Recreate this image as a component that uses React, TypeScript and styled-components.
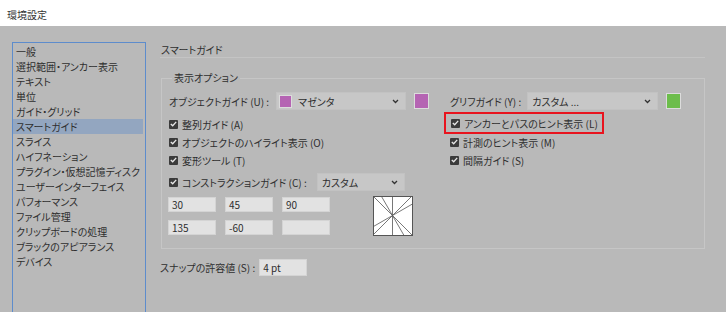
import styled, { createGlobalStyle } from 'styled-components';

const GlobalStyle = createGlobalStyle`
  body {
    margin: 0;
    font-family: "Noto Sans CJK JP", "Noto Sans", sans-serif;
    font-size: 10px;
    font-feature-settings: "palt";
    color: #2e2e2e;
    background: #b9b9b9;
  }
`;

const TitleBar = styled.div({
  height: '26px',
  background: '#ffffff',
  display: 'flex',
  alignItems: 'center',
  paddingLeft: '7px',
  paddingTop: '2px',
  boxSizing: 'border-box',
  fontSize: '10px',
  color: '#333'
});

const Main = styled.div({
  display: 'flex',
  height: '286px',
  background: '#b9b9b9',
  overflow: 'hidden'
});

const Sidebar = styled.ul({
  listStyle: 'none',
  margin: '16px 0 0 12px',
  padding: '1px 0 0 0',
  width: '134px',
  height: '300px',
  boxSizing: 'border-box',
  border: '1px solid #5d8ccc',
  flexShrink: 0
});

const SideItem = styled.li<{ $active?: boolean }>(props => ({
  height: '15px',
  lineHeight: '15px',
  paddingLeft: '3px',
  marginRight: '2px',
  background: props.$active ? '#93a6c0' : 'transparent',
  whiteSpace: 'nowrap'
}));

const Content = styled.div({
  marginLeft: '14px',
  width: '545px',
  display: 'flex',
  flexDirection: 'column'
});

const Heading = styled.div({
  height: '32px',
  padding: '16px 0 0 1px',
  lineHeight: '16px',
  borderBottom: '1px solid #c4c4c4',
  boxSizing: 'border-box'
});

const Group = styled.fieldset({
  margin: '14px 0 0 1px',
  padding: '7px 0 0 7px',
  height: '177px',
  boxSizing: 'border-box',
  border: '1px solid #c6c6c6',
  display: 'grid',
  gridTemplateColumns: '281px 1fr'
});

const Legend = styled.legend({
  padding: '0 2px',
  marginLeft: '3px',
  lineHeight: '12px'
});

const Column = styled.div({
  display: 'flex',
  flexDirection: 'column'
});

const Row = styled.div<{ $h?: number; $mt?: number }>(props => ({
  display: 'flex',
  alignItems: 'center',
  height: `${props.$h ?? 18}px`,
  marginTop: `${props.$mt ?? 0}px`,
  whiteSpace: 'nowrap'
}));

const Label = styled.span<{ $gap?: number }>(props => ({
  marginRight: `${props.$gap ?? 7}px`
}));

const Select = styled.div<{ $w: number }>(props => ({
  width: `${props.$w}px`,
  height: '18px',
  boxSizing: 'border-box',
  background: '#c7c7c7',
  border: '1px solid #c2c2c2',
  display: 'flex',
  alignItems: 'center',
  padding: '0 6px 0 2px',
  gap: '4px'
}));

const SelectText = styled.span({
  flex: 1,
  paddingLeft: '2px'
});

const Chevron = styled.svg({
  width: '7px',
  height: '5px'
});

const Swatch = styled.span<{ $color: string; $size: number }>(props => ({
  display: 'inline-block',
  width: `${props.$size}px`,
  height: `${props.$size}px`,
  background: props.$color,
  border: '1px solid #dcdcdc',
  boxSizing: 'border-box',
  flexShrink: 0
}));

const ColorChip = styled(Swatch)({
  marginLeft: '8px',
  height: '16px'
});

const CheckBox = styled.span({
  width: '9px',
  height: '9px',
  background: '#3b3b3b',
  borderRadius: '1px',
  marginRight: '4px',
  display: 'inline-flex',
  alignItems: 'center',
  justifyContent: 'center',
  flexShrink: 0
});

const Highlight = styled.div({
  margin: '1px 0 0 -6px',
  padding: '0 4px 0 5px',
  width: 'fit-content',
  height: '22px',
  boxSizing: 'border-box',
  border: '2px solid #e8141e',
  display: 'flex',
  alignItems: 'center',
  whiteSpace: 'nowrap'
});

const InputGrid = styled.div({
  display: 'grid',
  gridTemplateColumns: 'repeat(3, 48px)',
  columnGap: '9px',
  rowGap: '8px',
  marginLeft: '-1px'
});

const Field = styled.div<{ $w?: number }>(props => ({
  width: `${props.$w ?? 48}px`,
  height: `${props.$w ? 17 : 15}px`,
  boxSizing: 'border-box',
  background: '#e2e2e2',
  border: '1px solid #d4d4d4',
  paddingLeft: '3px',
  display: 'flex',
  alignItems: 'center',
  fontSize: '10px'
}));

const AngleBlock = styled.div({
  display: 'flex',
  alignItems: 'center',
  gap: '43px',
  marginTop: '2px'
});

const SnapRow = styled.div({
  display: 'flex',
  alignItems: 'center',
  marginTop: '10px',
  height: '17px'
});

function Check() {
  return (
    <CheckBox>
      <svg width='7' height='6' viewBox='0 0 7 6'>
        <path d='M0.8 3 L2.7 4.8 L6.2 0.9' fill='none' stroke='#e8e8e8' strokeWidth='1.3' />
      </svg>
    </CheckBox>
  );
}

function Down() {
  return (
    <Chevron viewBox='0 0 7 5'>
      <path d='M1 1 L3.5 3.5 L6 1' fill='none' stroke='#333' strokeWidth='1.3' />
    </Chevron>
  );
}

function CheckRow(props: { label: string; mt?: number }) {
  return (
    <Row $mt={props.mt}>
      <Check />
      {props.label}
    </Row>
  );
}

function AngleDiagram() {
  const angles = [30, 45, 90, 135, -60];
  const c = 19.5;
  return (
    <svg width='40' height='40' viewBox='0 0 40 40'>
      <rect x='0.5' y='0.5' width='39' height='39' fill='#ffffff' stroke='#555' />
      <clipPath id='box'>
        <rect x='1' y='1' width='38' height='38' />
      </clipPath>
      <g clipPath='url(#box)' stroke='#555' strokeWidth='0.8'>
        {angles.map(a => {
          const r = (a * Math.PI) / 180;
          const dx = Math.cos(r) * 40;
          const dy = -Math.sin(r) * 40;
          return <line key={a} x1={c - dx} y1={c - dy} x2={c + dx} y2={c + dy} />;
        })}
      </g>
    </svg>
  );
}

const menu = [
  '一般',
  '選択範囲・アンカー表示',
  'テキスト',
  '単位',
  'ガイド・グリッド',
  'スマートガイド',
  'スライス',
  'ハイフネーション',
  'プラグイン・仮想記憶ディスク',
  'ユーザーインターフェイス',
  'パフォーマンス',
  'ファイル管理',
  'クリップボードの処理',
  'ブラックのアピアランス',
  'デバイス'
];

export default function App() {
  return (
    <>
      <GlobalStyle />
      <TitleBar>環境設定</TitleBar>
      <Main>
        <Sidebar>
          {menu.map(m => (
            <SideItem key={m} $active={m === 'スマートガイド'}>
              {m}
            </SideItem>
          ))}
        </Sidebar>
        <Content>
          <Heading>スマートガイド</Heading>
          <Group>
            <Legend>表示オプション</Legend>
            <Column>
              <Row $h={20}>
                <Label>オブジェクトガイド (U) :</Label>
                <Select $w={130}>
                  <Swatch $color='#b564b3' $size={13} />
                  <SelectText>マゼンタ</SelectText>
                  <Down />
                </Select>
                <ColorChip $color='#b564b3' $size={15} />
              </Row>
              <CheckRow label='整列ガイド (A)' mt={4} />
              <CheckRow label='オブジェクトのハイライト表示 (O)' />
              <CheckRow label='変形ツール (T)' />
              <Row $h={24} $mt={1}>
                <Check />
                <Label $gap={10}>コンストラクションガイド (C) :</Label>
                <Select $w={88}>
                  <SelectText>カスタム</SelectText>
                  <Down />
                </Select>
              </Row>
              <AngleBlock>
                <InputGrid>
                  <Field>30</Field>
                  <Field>45</Field>
                  <Field>90</Field>
                  <Field>135</Field>
                  <Field>-60</Field>
                  <Field />
                </InputGrid>
                <AngleDiagram />
              </AngleBlock>
            </Column>
            <Column>
              <Row $h={20}>
                <Label $gap={6}>グリフガイド (Y) :</Label>
                <Select $w={131}>
                  <SelectText>カスタム ...</SelectText>
                  <Down />
                </Select>
                <ColorChip $color='#6cbd4b' $size={15} />
              </Row>
              <Highlight>
                <Check />
                アンカーとパスのヒント表示 (L)
              </Highlight>
              <CheckRow label='計測のヒント表示 (M)' mt={-1} />
              <CheckRow label='間隔ガイド (S)' />
            </Column>
          </Group>
          <SnapRow>
            <Label $gap={4}>スナップの許容値 (S) :</Label>
            <Field $w={48}>4 pt</Field>
          </SnapRow>
        </Content>
      </Main>
    </>
  );
}
